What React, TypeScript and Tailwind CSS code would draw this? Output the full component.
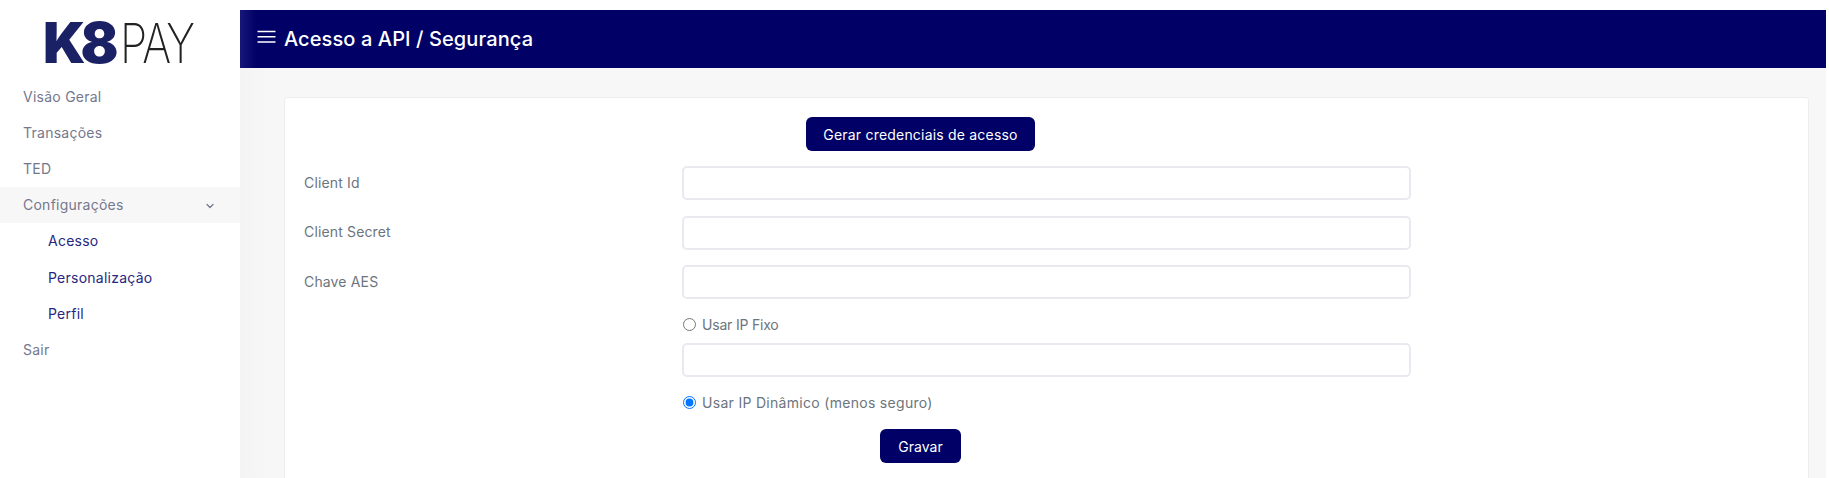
import { ChevronDown } from 'lucide-react';

const font = { fontFamily: 'Inter, "Open Sans", sans-serif' };

const menu = ['Visão Geral', 'Transações', 'TED'];
const subMenu = ['Acesso', 'Personalização', 'Perfil'];

const Sidebar = () => (
    <aside className="w-[240px] shrink-0 bg-white">
        {/* Logo */}
        <div className="h-[78px] pt-[22px] pl-[43px]">
            <div className="flex items-center h-[42px] leading-none font-['Inter'] text-[56px]">
                <span className="font-black text-[#1b2165] tracking-[-5px]">K8</span>
                <span className="inline-block origin-left scale-x-80 font-extralight text-[#222222] ml-[6px] tracking-[-2px] text-[55px]">PAY</span>
            </div>
        </div>
        <nav className="text-[14px] tracking-[0.25px] text-[#74788d]">
            {menu.map((item) => (
                <div key={item} className="h-[36.2px] flex items-center pl-[23px]">{item}</div>
            ))}
            <div className="h-[36.2px] flex items-center justify-between pl-[23px] pr-[24px] bg-[#f7f7f7]">
                Configurações
                <ChevronDown className="w-[12px] h-[12px] mt-[3px]" strokeWidth={2.5} />
            </div>
            {subMenu.map((item) => (
                <div key={item} className="h-[36.2px] flex items-center pl-[48px] text-[#27277f]">{item}</div>
            ))}
            <div className="h-[36.2px] flex items-center pl-[23px]">Sair</div>
        </nav>
    </aside>
);

const Field = ({ label }: { label: string }) => (
    <div className="flex items-center mb-[15.5px]">
        <label className="w-[397px] shrink-0 pl-[19px] -mt-[2px] text-[14px] tracking-[0.15px] text-[#6c757d]">{label}</label>
        <input type="text" className="w-[729px] h-[34px] bg-white border-2 border-[#e9e9ef] rounded-[5px]" />
    </div>
);

export default function App() {
    return (
        <div className="flex h-screen overflow-hidden bg-white pr-[3px] pt-[10px]" style={font}>
            <div className="-mt-[10px]">
                <Sidebar />
            </div>
            <main className="flex-1 bg-[linear-gradient(90deg,#f4f4f4,#f7f7f7_30px)]">
                <header className="h-[58px] bg-[linear-gradient(90deg,#17177a,#000066_16px)] flex items-center pl-[17px] text-white">
                    <svg width="19" height="14" viewBox="0 0 19 14" className="mr-[8px] -mt-[4px]" stroke="white" strokeWidth="1.6">
                        <path d="M0.5 1.5h18M0.5 6.8h18M0.5 12h18" />
                    </svg>
                    <h1 className="text-[20px] font-medium tracking-[0.1px]">Acesso a API / Segurança</h1>
                </header>
                <div className="mt-[29px] ml-[44px] mr-[17px] h-[400px] bg-white border border-[#eeeeee] rounded-[3px] pt-[19px]">
                    <div className="pl-[521px] mb-[15px]">
                        <button className="w-[229px] h-[34px] bg-[#000066] text-white text-[14px] tracking-[0.2px] rounded-[6px]">Gerar credenciais de acesso</button>
                    </div>
                    <Field label="Client Id" />
                    <Field label="Client Secret" />
                    <Field label="Chave AES" />
                    <div className="pl-[398px] pt-[1px]">
                        <label className="flex items-center h-[18px] text-[14px] tracking-[-0.2px] text-[#6c757d]">
                            <input type="radio" name="ip" className="mr-[6px] w-[13px] h-[13px] m-0" />
                            Usar IP Fixo
                        </label>
                        <input type="text" className="block w-[729px] h-[34px] mt-[9.5px] -ml-[1px] bg-white border-2 border-[#e9e9ef] rounded-[5px]" />
                        <label className="flex items-center h-[18px] mt-[16.5px] text-[14px] tracking-[0.3px] text-[#6c757d]">
                            <input type="radio" name="ip" defaultChecked className="mr-[6px] w-[13px] h-[13px] m-0" />
                            Usar IP Dinâmico (menos seguro)
                        </label>
                        <div className="pl-[197px] mt-[17.5px]">
                            <button className="w-[81px] h-[34px] bg-[#000066] text-white text-[14px] rounded-[6px]">Gravar</button>
                        </div>
                    </div>
                </div>
            </main>
        </div>
    );
}
